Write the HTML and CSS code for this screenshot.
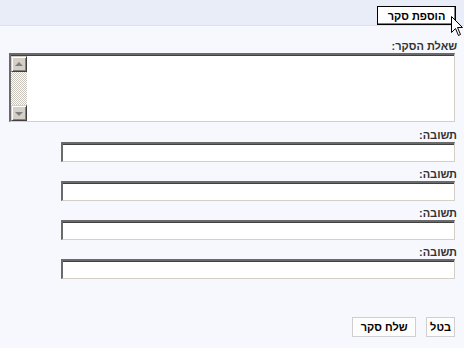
FILE: index.html
```html
<!DOCTYPE html>
<html lang="he" dir="rtl">
<head>
<meta charset="utf-8">
<link rel="stylesheet" href="styles.css">
</head>
<body>
<div class="topbar">
  <button class="btn-add">הוספת סקר</button>
</div>
<div class="form">
  <div class="label label-q">שאלת הסקר:</div>
  <div class="qbox">
    <div class="qarea"></div>
    <div class="sbar">
      <div class="sbtn"><span class="arrow up"></span></div>
      <div class="strack"></div>
      <div class="sbtn"><span class="arrow down"></span></div>
    </div>
  </div>
  <div class="answers">
    <div class="answer"><div class="label">תשובה:</div><div class="field"></div></div>
    <div class="answer"><div class="label">תשובה:</div><div class="field"></div></div>
    <div class="answer"><div class="label">תשובה:</div><div class="field"></div></div>
    <div class="answer"><div class="label">תשובה:</div><div class="field"></div></div>
  </div>
  <div class="actions">
    <button class="btn">בטל</button>
    <button class="btn btn-send">שלח סקר</button>
  </div>
</div>
<svg class="cursor" width="13" height="21" viewBox="0 0 13 21">
  <path d="M0.5 0.5 L0.5 16.5 L4.5 12.5 L7.5 19.5 L9.5 18.5 L6.5 11.5 L11.5 11.5 Z" fill="#fff" stroke="#000" stroke-width="1" stroke-linejoin="miter"/>
</svg>
</body>
</html>
```

FILE: styles.css
```css
html, body {
  margin: 0;
  padding: 0;
}
body {
  width: 464px;
  height: 348px;
  background: #f6f8fd;
  font-family: "Liberation Sans", "DejaVu Sans", sans-serif;
  font-size: 11px;
  font-weight: bold;
  color: #222;
  position: relative;
  overflow: hidden;
}
.topbar {
  height: 25px;
  background: #e9edf8;
  border-bottom: 1px solid #dde2ee;
  display: flex;
  align-items: flex-start;
  padding-right: 8px;
}
button {
  font-family: inherit;
  font-size: 11px;
  font-weight: bold;
  color: #000;
  margin: 0;
  cursor: default;
}
.btn-add {
  margin-top: 6px;
  width: 79px;
  height: 19px;
  padding: 0;
  background: #fff;
  border: 1px solid #000;
  box-shadow: inset -1px -1px 0 #808080, inset 1px 1px 0 #fff;
}
.form {
  padding: 13px 9px 0 9px;
}
.label {
  height: 14px;
  line-height: 14px;
  margin-right: -2px;
  color: #333;
}
.qbox {
  height: 66px;
  display: flex;
  border-style: solid;
  border-width: 2px 1px 1px 2px;
  border-color: #6a6a6a #d4d0c8 #d4d0c8 #6a6a6a;
  box-shadow: inset 0 1px 0 #404040;
  background: #fff;
}
.qarea {
  flex: 1;
}
.sbar {
  width: 16px;
  display: flex;
  flex-direction: column;
  margin-top: 1px;
}
.sbtn {
  height: 16px;
  box-sizing: border-box;
  background: #d4d0c8;
  border-style: solid;
  border-width: 1px;
  border-color: #d4d0c8 #404040 #404040 #d4d0c8;
  box-shadow: inset 1px 1px 0 #fff, inset -1px -1px 0 #808080;
  display: flex;
  align-items: center;
  justify-content: center;
}
.strack {
  flex: 1;
  background-color: #fff;
  background-image: repeating-conic-gradient(#c8c4bc 0 25%, #fff 0 50%);
  background-size: 2px 2px;
}
.arrow {
  width: 0;
  height: 0;
  border-left: 4px solid transparent;
  border-right: 4px solid transparent;
}
.arrow.up {
  border-bottom: 4px solid #808080;
  margin-top: -1px;
}
.arrow.down {
  border-top: 4px solid #808080;
  margin-top: 1px;
}
.answers {
  margin-top: 6px;
}
.answer {
  margin-bottom: 5px;
}
.field {
  height: 17px;
  margin-left: 52px;
  background: #fff;
  border-style: solid;
  border-width: 2px 1px 1px 2px;
  border-color: #6a6a6a #d4d0c8 #d4d0c8 #6a6a6a;
  box-shadow: inset 0 1px 0 #404040;
}
.actions {
  margin-top: 38px;
  display: flex;
  gap: 10px;
}
.btn {
  height: 20px;
  padding: 0 3px;
  background: #fdfdfd;
  border: 1px solid #cfcfcf;
}
.btn-send {
  width: 64px;
}
.cursor {
  position: absolute;
  left: 451px;
  top: 16px;
}
```
